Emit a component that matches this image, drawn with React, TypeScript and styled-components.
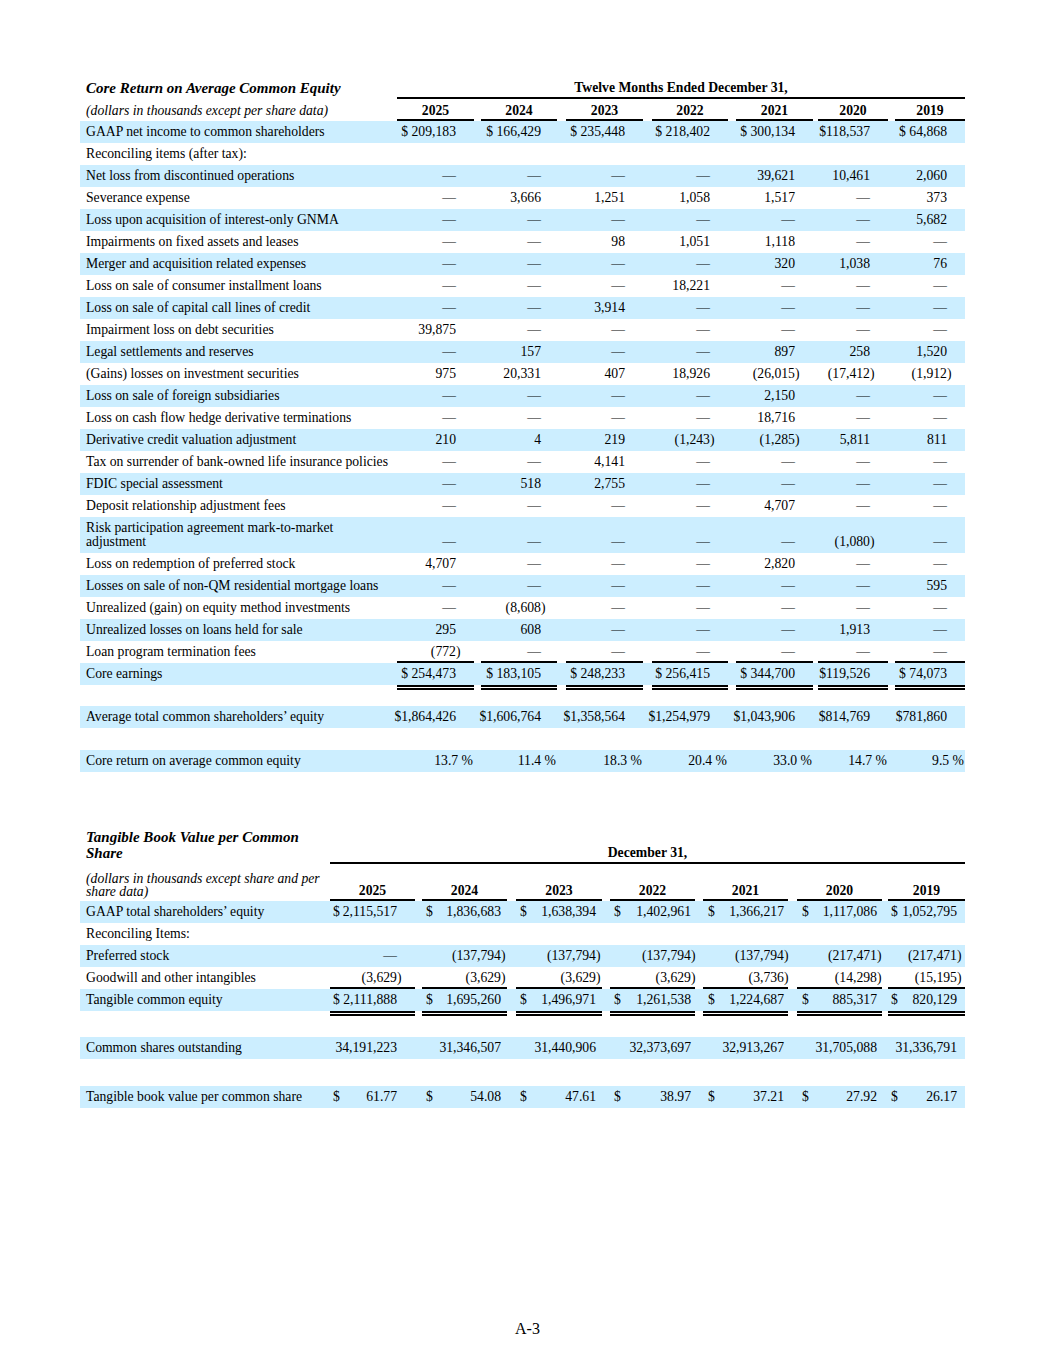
import React from 'react';
import styled, { createGlobalStyle } from 'styled-components';

const GlobalStyle = createGlobalStyle`
  html, body { margin: 0; padding: 0; background: #fff; }
  body { font-family: "Liberation Serif", "Times New Roman", serif; color: #000; }
`;

type Col = { w: number; g: number; pad: number; dpad?: number };
type Cfg = { label: number; cols: Col[]; splitDollar: boolean };

type DataRow =
  | { kind: 'row'; label: string; vals?: string[]; shade?: boolean; rule?: boolean }
  | { kind: 'gap'; h: number; double?: boolean };

const Page = styled.div`
  width: 1055px;
  min-height: 1365px;
  box-sizing: border-box;
  padding-top: 80px;
  display: flex;
  flex-direction: column;
`;

const Content = styled.div`
  padding-left: 80px;
  display: flex;
  flex-direction: column;
`;

const Table = styled.section<{ $gap?: number }>`
  width: 885px;
  display: flex;
  flex-direction: column;
  margin-top: ${(p) => p.$gap ?? 0}px;
  font-size: 13.7px;
  line-height: 14px;
`;

const Row = styled.div<{ $shade?: boolean; $h?: number }>`
  display: flex;
  align-items: flex-end;
  min-height: ${(p) => p.$h ?? 22}px;
  background: ${(p) => (p.$shade ? '#cceeff' : 'transparent')};
`;

const Label = styled.div<{ $w: number }>`
  width: ${(p) => p.$w}px;
  flex: none;
  box-sizing: border-box;
  padding: 4px 6px;
`;

const Title = styled(Label)`
  font-weight: bold;
  font-style: italic;
  font-size: 15px;
  line-height: 16px;
  padding: 0 6px 3px;
`;

const Units = styled(Label)<{ $lh: number }>`
  font-style: italic;
  line-height: ${(p) => p.$lh}px;
  padding-top: 0;
  padding-bottom: 3px;
`;

const SpanHead = styled.div`
  flex: 1;
  text-align: center;
  font-weight: bold;
  padding-bottom: 2px;
  border-bottom: 2px solid #000;
`;

const Year = styled.div<{ $w: number; $g: number }>`
  width: ${(p) => p.$w}px;
  margin-left: ${(p) => p.$g}px;
  flex: none;
  box-sizing: border-box;
  text-align: center;
  font-weight: bold;
  padding-bottom: 1px;
  border-bottom: 2px solid #000;
`;

const Cell = styled.div<{ $w: number; $g: number; $pr: number; $pl: number; $rule?: boolean }>`
  width: ${(p) => p.$w}px;
  margin-left: ${(p) => p.$g}px;
  flex: none;
  box-sizing: border-box;
  display: flex;
  justify-content: flex-end;
  white-space: nowrap;
  padding: 4px ${(p) => p.$pr}px ${(p) => (p.$rule ? 2 : 4)}px ${(p) => p.$pl}px;
  border-bottom: ${(p) => (p.$rule ? '2px solid #000' : 'none')};
`;

const Dollar = styled.span`
  margin-right: auto;
`;

const Num = styled.span<{ $hang: number }>`
  margin-right: ${(p) => -p.$hang}px;
`;

const Gap = styled.div<{ $h: number }>`
  display: flex;
  height: ${(p) => p.$h}px;
`;

const Blank = styled.div<{ $w: number }>`
  width: ${(p) => p.$w}px;
  flex: none;
`;

const RuleSeg = styled.div<{ $w: number; $g: number; $double?: boolean }>`
  width: ${(p) => p.$w}px;
  margin-left: ${(p) => p.$g}px;
  flex: none;
  box-sizing: border-box;
  border-top: ${(p) => (p.$double ? '5px double #000' : 'none')};
`;

const Footer = styled.div`
  margin-top: 212px;
  text-align: center;
  font-size: 16px;
  line-height: 18px;
`;

const YEARS = ['2025', '2024', '2023', '2022', '2021', '2020', '2019'];

const T1: Cfg = {
  label: 317,
  splitDollar: false,
  cols: [
    { w: 77, g: 0, pad: 18 },
    { w: 76, g: 7, pad: 16 },
    { w: 77, g: 9, pad: 18 },
    { w: 76, g: 9, pad: 18 },
    { w: 77, g: 8, pad: 18 },
    { w: 70, g: 5, pad: 18 },
    { w: 70, g: 7, pad: 18 },
  ],
};

const T2: Cfg = {
  label: 250,
  splitDollar: true,
  cols: [
    { w: 85, g: 0, pad: 18, dpad: 3 },
    { w: 85, g: 7, pad: 6, dpad: 4 },
    { w: 86, g: 9, pad: 6, dpad: 4 },
    { w: 85, g: 8, pad: 4, dpad: 4 },
    { w: 85, g: 8, pad: 4, dpad: 5 },
    { w: 85, g: 9, pad: 5, dpad: 5 },
    { w: 77, g: 6, pad: 8, dpad: 3 },
  ],
};

const D = '—';

const rows1: DataRow[] = [
  { kind: 'row', shade: true, label: 'GAAP net income to common shareholders', vals: ['$ 209,183', '$ 166,429', '$ 235,448', '$ 218,402', '$ 300,134', '$118,537', '$ 64,868'] },
  { kind: 'row', label: 'Reconciling items (after tax):' },
  { kind: 'row', shade: true, label: 'Net loss from discontinued operations', vals: [D, D, D, D, '39,621', '10,461', '2,060'] },
  { kind: 'row', label: 'Severance expense', vals: [D, '3,666', '1,251', '1,058', '1,517', D, '373'] },
  { kind: 'row', shade: true, label: 'Loss upon acquisition of interest-only GNMA', vals: [D, D, D, D, D, D, '5,682'] },
  { kind: 'row', label: 'Impairments on fixed assets and leases', vals: [D, D, '98', '1,051', '1,118', D, D] },
  { kind: 'row', shade: true, label: 'Merger and acquisition related expenses', vals: [D, D, D, D, '320', '1,038', '76'] },
  { kind: 'row', label: 'Loss on sale of consumer installment loans', vals: [D, D, D, '18,221', D, D, D] },
  { kind: 'row', shade: true, label: 'Loss on sale of capital call lines of credit', vals: [D, D, '3,914', D, D, D, D] },
  { kind: 'row', label: 'Impairment loss on debt securities', vals: ['39,875', D, D, D, D, D, D] },
  { kind: 'row', shade: true, label: 'Legal settlements and reserves', vals: [D, '157', D, D, '897', '258', '1,520'] },
  { kind: 'row', label: '(Gains) losses on investment securities', vals: ['975', '20,331', '407', '18,926', '(26,015)', '(17,412)', '(1,912)'] },
  { kind: 'row', shade: true, label: 'Loss on sale of foreign subsidiaries', vals: [D, D, D, D, '2,150', D, D] },
  { kind: 'row', label: 'Loss on cash flow hedge derivative terminations', vals: [D, D, D, D, '18,716', D, D] },
  { kind: 'row', shade: true, label: 'Derivative credit valuation adjustment', vals: ['210', '4', '219', '(1,243)', '(1,285)', '5,811', '811'] },
  { kind: 'row', label: 'Tax on surrender of bank-owned life insurance policies', vals: [D, D, '4,141', D, D, D, D] },
  { kind: 'row', shade: true, label: 'FDIC special assessment', vals: [D, '518', '2,755', D, D, D, D] },
  { kind: 'row', label: 'Deposit relationship adjustment fees', vals: [D, D, D, D, '4,707', D, D] },
  { kind: 'row', shade: true, label: 'Risk participation agreement mark-to-market adjustment', vals: [D, D, D, D, D, '(1,080)', D] },
  { kind: 'row', label: 'Loss on redemption of preferred stock', vals: ['4,707', D, D, D, '2,820', D, D] },
  { kind: 'row', shade: true, label: 'Losses on sale of non-QM residential mortgage loans', vals: [D, D, D, D, D, D, '595'] },
  { kind: 'row', label: 'Unrealized (gain) on equity method investments', vals: [D, '(8,608)', D, D, D, D, D] },
  { kind: 'row', shade: true, label: 'Unrealized losses on loans held for sale', vals: ['295', '608', D, D, D, '1,913', D] },
  { kind: 'row', rule: true, label: 'Loan program termination fees', vals: ['(772)', D, D, D, D, D, D] },
  { kind: 'row', shade: true, label: 'Core earnings', vals: ['$ 254,473', '$ 183,105', '$ 248,233', '$ 256,415', '$ 344,700', '$119,526', '$ 74,073'] },
  { kind: 'gap', h: 21, double: true },
  { kind: 'row', shade: true, label: 'Average total common shareholders’ equity', vals: ['$1,864,426', '$1,606,764', '$1,358,564', '$1,254,979', '$1,043,906', '$814,769', '$781,860'] },
  { kind: 'gap', h: 22 },
  { kind: 'row', shade: true, label: 'Core return on average common equity', vals: ['13.7 %', '11.4 %', '18.3 %', '20.4 %', '33.0 %', '14.7 %', '9.5 %'] },
];

const rows2: DataRow[] = [
  { kind: 'row', shade: true, label: 'GAAP total shareholders’ equity', vals: ['$ 2,115,517', '$ 1,836,683', '$ 1,638,394', '$ 1,402,961', '$ 1,366,217', '$ 1,117,086', '$ 1,052,795'] },
  { kind: 'row', label: 'Reconciling Items:' },
  { kind: 'row', shade: true, label: 'Preferred stock', vals: [D, '(137,794)', '(137,794)', '(137,794)', '(137,794)', '(217,471)', '(217,471)'] },
  { kind: 'row', rule: true, label: 'Goodwill and other intangibles', vals: ['(3,629)', '(3,629)', '(3,629)', '(3,629)', '(3,736)', '(14,298)', '(15,195)'] },
  { kind: 'row', shade: true, label: 'Tangible common equity', vals: ['$ 2,111,888', '$ 1,695,260', '$ 1,496,971', '$ 1,261,538', '$ 1,224,687', '$ 885,317', '$ 820,129'] },
  { kind: 'gap', h: 26, double: true },
  { kind: 'row', shade: true, label: 'Common shares outstanding', vals: ['34,191,223', '31,346,507', '31,440,906', '32,373,697', '32,913,267', '31,705,088', '31,336,791'] },
  { kind: 'gap', h: 27 },
  { kind: 'row', shade: true, label: 'Tangible book value per common share', vals: ['$ 61.77', '$ 54.08', '$ 47.61', '$ 38.97', '$ 37.21', '$ 27.92', '$ 26.17'] },
];

function ValueCell({ cfg, col, v, rule }: { cfg: Cfg; col: Col; v: string; rule?: boolean }) {
  const isPct = v.endsWith('%');
  const hang = v.endsWith(')') ? 4.5 : 0;
  const pr = isPct ? 1 : col.pad;
  let dollar: string | null = null;
  let num = v;
  if (cfg.splitDollar && v.startsWith('$ ')) {
    dollar = '$';
    num = v.slice(2);
  }
  return (
    <Cell $w={col.w} $g={col.g} $pr={pr} $pl={col.dpad ?? 0} $rule={rule}>
      {dollar && <Dollar>{dollar}</Dollar>}
      <Num $hang={hang}>{num}</Num>
    </Cell>
  );
}

function Body({ cfg, rows }: { cfg: Cfg; rows: DataRow[] }) {
  return (
    <>
      {rows.map((r, i) => {
        if (r.kind === 'gap') {
          return (
            <Gap key={i} $h={r.h}>
              <Blank $w={cfg.label} />
              {cfg.cols.map((c, j) => (
                <RuleSeg key={j} $w={c.w} $g={c.g} $double={r.double} />
              ))}
            </Gap>
          );
        }
        return (
          <Row key={i} $shade={r.shade}>
            <Label $w={cfg.label}>{r.label}</Label>
            {r.vals &&
              r.vals.map((v, j) => <ValueCell key={j} cfg={cfg} col={cfg.cols[j]} v={v} rule={r.rule} />)}
          </Row>
        );
      })}
    </>
  );
}

function YearRow({ cfg, units, h, lh }: { cfg: Cfg; units: string; h: number; lh: number }) {
  return (
    <Row $h={h}>
      <Units $w={cfg.label} $lh={lh}>
        {units}
      </Units>
      {YEARS.map((y, j) => (
        <Year key={y} $w={cfg.cols[j].w} $g={cfg.cols[j].g}>
          {y}
        </Year>
      ))}
    </Row>
  );
}

export default function App() {
  return (
    <Page>
      <GlobalStyle />
      <Content>
        <Table>
          <Row $h={19}>
            <Title $w={T1.label}>Core Return on Average Common Equity</Title>
            <SpanHead>Twelve Months Ended December 31,</SpanHead>
          </Row>
          <YearRow cfg={T1} units="(dollars in thousands except per share data)" h={22} lh={14} />
          <Body cfg={T1} rows={rows1} />
        </Table>

        <Table $gap={57}>
          <Row $h={35}>
            <Title $w={T2.label}>Tangible Book Value per Common Share</Title>
            <SpanHead>December 31,</SpanHead>
          </Row>
          <YearRow cfg={T2} units="(dollars in thousands except share and per share data)" h={37} lh={13} />
          <Body cfg={T2} rows={rows2} />
        </Table>
      </Content>
      <Footer>A-3</Footer>
    </Page>
  );
}
